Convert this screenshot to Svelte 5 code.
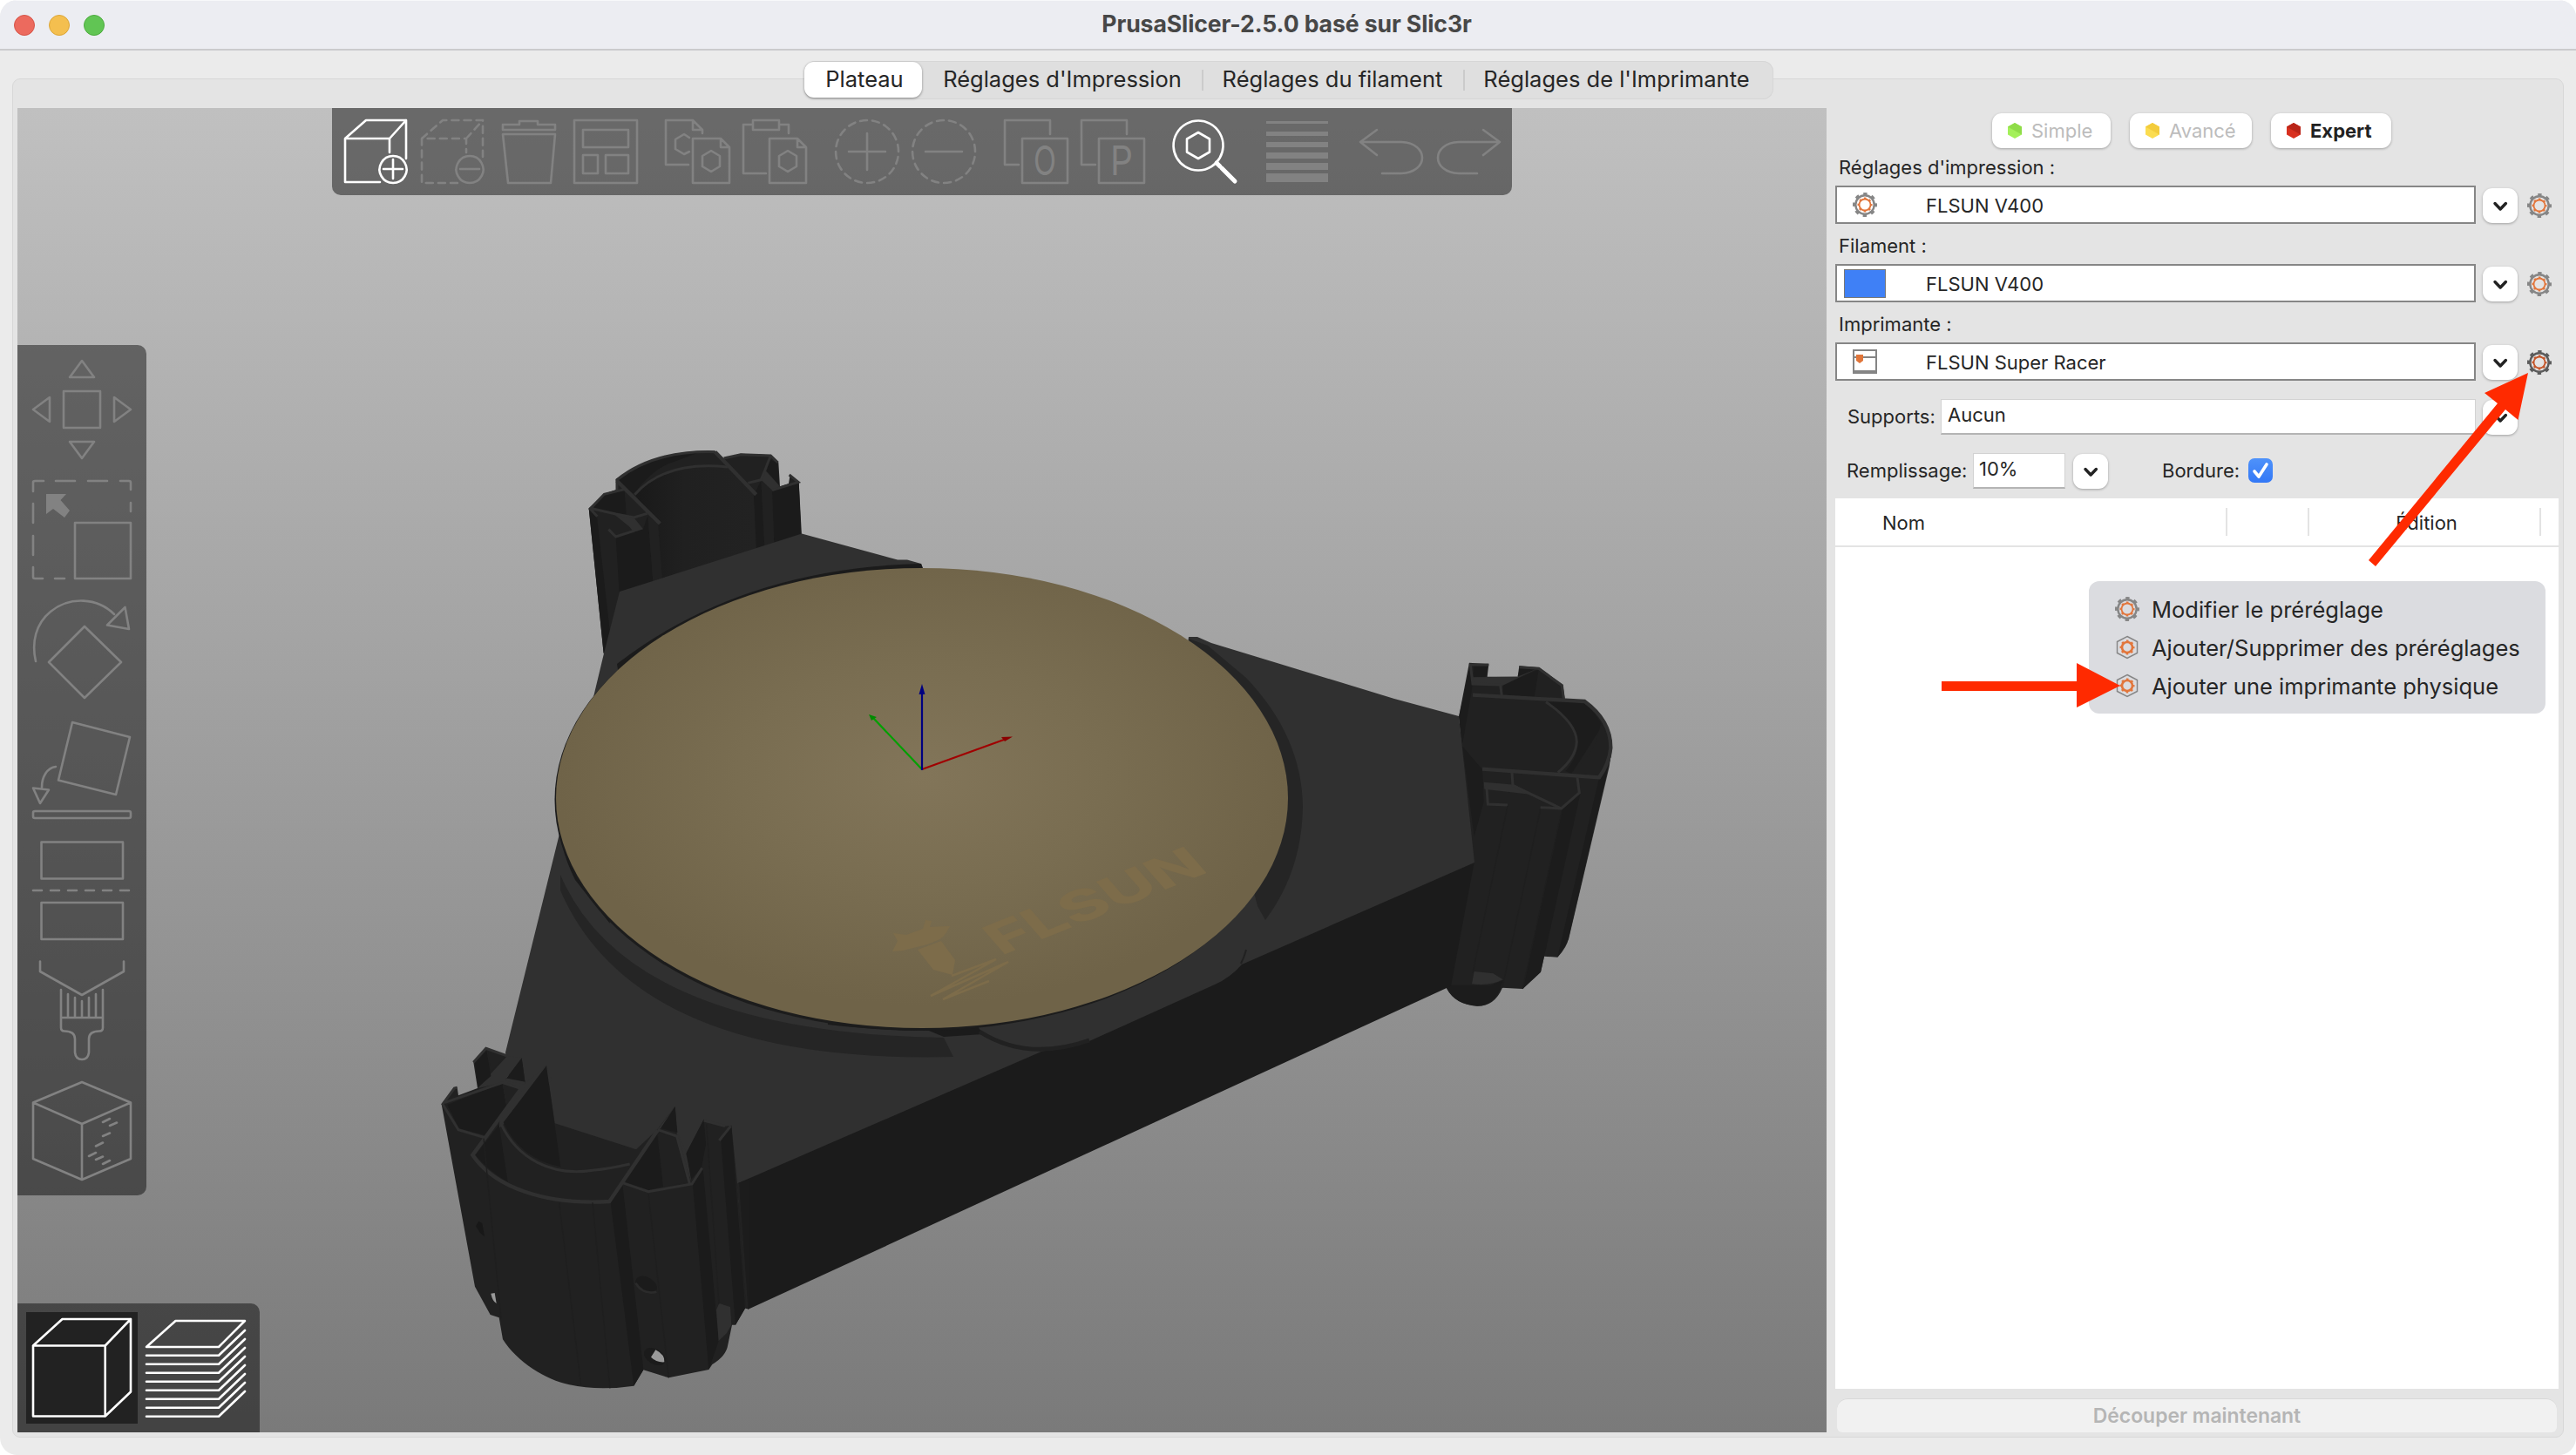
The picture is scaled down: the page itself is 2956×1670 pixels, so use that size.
<script>
  const tabs = [
    { label: 'Plateau', cls: 'active w1' },
    { label: "Réglages d'Impression", cls: 'w2' },
    { label: 'Réglages du filament', cls: 'w3' },
    { label: "Réglages de l'Imprimante", cls: 'w4' }
  ];

  const modes = [
    { label: 'Simple', cls: 'simple', light: '#a4f05a', dark: '#8fdc48' },
    { label: 'Avancé', cls: 'advanced', light: '#fbdc50', dark: '#f3cc3c' },
    { label: 'Expert', cls: 'expert', light: '#d8301f', dark: '#b92518' }
  ];

  const presets = [
    { label: "Réglages d'impression :", value: 'FLSUN V400', icon: 'gear' },
    { label: 'Filament :', value: 'FLSUN V400', icon: 'color' },
    { label: 'Imprimante :', value: 'FLSUN Super Racer', icon: 'printer' }
  ];

  // Every tool icon shares the coordinate system of the window; x is its left edge.
  const groups = [
    [
      { x: 391, on: true, d: 'M436 209H396V159H447V175M396 159L420 138H466V182M447 159L466 138', thin: 'M451 179a15.500 15.500 0 1 0 .1 0zM440 194h22M451 183v22' },
      { x: 479, dash: 'M525 210H484V159H535V175M484 159L508 138H554V180M535 159L554 138', d: 'M539 179a15.500 15.500 0 1 0 .1 0zM528 194h22' },
      { x: 567, d: 'M577 149v-6h19v-4h21v4h20v6zM577 154h60l-5 56h-49z' },
      { x: 655, d: 'M659 138h72v72h-72zM669 149h52v20h-52zM669 178h17v21h-17zM695 178h26v21h-26z' }
    ],
    [
      { x: 761, d: 'M790 189H764V138H795L806 149V153M795 138V149H806M791 158L785 154L775 160V171L785 177L791 174M795 159H827L837 169V210H795zM827 159V169H837M816 173l10 6v12l-10 6l-10-6v-12z' },
      { x: 849, d: 'M879 199H853V143H864M894 143H905V153M864 138H894V149H864zM883 159H915L925 169V210H883zM915 159V169H925M904 173l10 6v12l-10 6l-10-6v-12z' }
    ],
    [
      { x: 955, dash: 'M995 138a36 36 0 1 0 .1 0z', d: 'M974 174h42M995 153v42' },
      { x: 1043, dash: 'M1083 138a36 36 0 1 0 .1 0z', d: 'M1062 174h42' }
    ],
    [
      { x: 1149, d: 'M1169 189H1153V138H1205V154M1173 159h52v51h-52z', t: 'O', tx: 1199 },
      { x: 1237, d: 'M1257 189H1241V138H1293V154M1261 159h52v51h-52z', t: 'P', tx: 1287 }
    ],
    [{ x: 1343, on: true, d: 'M1375 138.500a28.500 28.500 0 1 0 .1 0zM1375 152l13 7.500v15l-13 7.500l-13-7.500v-15z', fat: 'M1396 187L1400 191M1402 193L1417 208' }],
    [{ x: 1449, f: 'M1453 139h71v3h-71zM1453 151h71v5h-71zM1453 163h71v6h-71zM1453 175h71v7h-71zM1453 187h71v8h-71zM1453 199h71v10h-71z' }],
    [
      { x: 1555, d: 'M1580 149L1561 163L1580 178M1561 163H1608C1640 164 1640 198 1608 199H1586' },
      { x: 1643, d: 'M1702 149L1721 163L1702 178M1721 163H1674C1642 164 1642 198 1674 199H1695' }
    ]
  ];

  const gizmos = [
    { y: 401, d: 'M94 414L108 433H80zM94 526L108 507H80zM38 470L57 456V484zM150 470L131 456V484zM73 449h42v42h-42z' },
    { y: 539, d: 'M86 600h64v64h-64zM38 564V554a2 2 0 0 1 2-2H50M64 552H86M101 552H123M138 552H148a2 2 0 0 1 2 2V562M150 577V587M38 578V600M38 615V637M38 651V662a2 2 0 0 0 2 2H49M63 664H74', f: 'M53 567H76L69.500 574L80 586L74 594L61 584L53 590z' },
    { y: 677, d: 'M41 759C36 737 41 716 58 702C80 684 112 686 131 705M143.500 697L148 722L123 717.500zM97 719L139 760L97 801L56 760z' },
    { y: 815, d: 'M83 829L149 846L133 912L67 895.500zM64 880C54 881 48 892 48 903.500M38 904.500L56 906.500L46 922zM40 931H148a2 2 0 0 1 2 2V937a2 2 0 0 1-2 2H40a2 2 0 0 1-2-2V933a2 2 0 0 1 2-2z' },
    { y: 953, d: 'M47.500 966.500h93.500v42h-93.500zM47.500 1036h93.500v42h-93.500zM38 1022h10M58 1022h10M78 1022h10M98 1022h10M118 1022h10M138 1022h10' },
    { y: 1091, d: 'M46 1103.500V1115L94 1142L142 1115V1103.500M70 1136V1179.500Q70 1183.500 74 1183.500Q86 1183.500 86 1192.500V1208Q87 1216 94 1216Q101 1216 102 1208V1192.500Q102 1183.500 114 1183.500Q118 1183.500 118 1179.500V1136M70 1168H118M78 1141V1168M86 1145V1168M94 1149V1168M102 1145V1168M110 1141V1168' },
    { y: 1229, d: 'M94 1242L150 1265.500V1330L94 1354L38 1330V1265.500zM38 1265.500L94 1290L150 1265.500M94 1290V1354M118 1288l8-4M126 1292l8-3.500M118 1304l8-3.500M110 1315.500l8-4M102 1327l8-4M110 1331l8-3.500M118 1336l8-4' }
  ];

  const layerOffsets = [10, 20, 30, 40, 50, 60, 70, 80];
  const menu = [
    { label: 'Modifier le préréglage', icon: 'gear' },
    { label: 'Ajouter/Supprimer des préréglages', icon: 'nut' },
    { label: 'Ajouter une imprimante physique', icon: 'nut' }
  ];
</script>

{#snippet gear(dark)}
  <svg class="gear" class:dark viewBox="0 0 28 28" fill="none">
    <circle class="g" cx="14" cy="14" r="10.700" stroke-width="2.400" />
    <circle class="g" cx="14" cy="14" r="12.500" stroke-width="3" stroke-dasharray="4.400 5.417" stroke-dashoffset="2.200" />
    <circle class="o" cx="14" cy="14" r="6.500" stroke-width="1.800" />
    <circle class="o" cx="14" cy="14" r="7.600" stroke-width="1.800" stroke-dasharray="2.600 3.370" stroke-dashoffset="1.300" />
  </svg>
{/snippet}

{#snippet nut()}
  <svg class="gear" viewBox="0 0 28 28" fill="none">
    <path class="g" d="M14 1.500L25.500 7.500V20.500L14 26.500L2.500 20.500V7.500z" stroke-width="1.500" />
    <circle class="o" cx="14" cy="14" r="6" stroke-width="2.600" />
    <circle class="o" cx="14" cy="14" r="7.600" stroke-width="1.800" stroke-dasharray="2.600 3.370" stroke-dashoffset="1.300" />
  </svg>
{/snippet}

{#snippet chevron()}
  <button class="chev" aria-label="Ouvrir la liste">
    <svg viewBox="0 0 40 40"><path d="M14 17.500L20.200 24L26.400 17.500" /></svg>
  </button>
{/snippet}

<div class="window">
  <header>
    <div class="lights"><i class="red"></i><i class="yellow"></i><i class="green"></i></div>
    <h1>PrusaSlicer-2.5.0 basé sur Slic3r</h1>
  </header>

  <nav>
    {#each tabs as tab}
      <button class={tab.cls}><span>{tab.label}</span></button>
    {/each}
  </nav>

  <main>
    <section class="canvas">
      <svg class="scene" viewBox="20 124 2076 1520">
        <defs>
          <radialGradient id="bed" cx="0.5" cy="0.45" r="0.5">
            <stop offset="0" stop-color="#827559" />
            <stop offset="0.5" stop-color="#796d51" />
            <stop offset="1" stop-color="#6f6348" />
          </radialGradient>
          <linearGradient id="tube" x1="0" x2="1">
            <stop offset="0" stop-color="#191919" />
            <stop offset="0.4" stop-color="#202020" />
            <stop offset="1" stop-color="#222" />
          </linearGradient>
        </defs>

        <!-- rear tower -->
        <g transform="translate(640 500) scale(.33333)">
          <path class="mid" d="M107 250L158 750L300 700L840 345L830 160L800 135L795 165L765 175L760 93L733 67L630 62L572 78L542 53Q350 45 200 150L203 185L160 200z" />
          <path fill="url(#tube)" d="M265 203Q380 85 585 110L675 205L684 395L360 500L345 305z" />
          <path class="deep" d="M107 250L135 278L180 680L158 750zM200 350L294 322L310 275L328 505L212 540zM675 205L700 155L712 385L684 395zM738 188L830 160L838 345L745 375zM120 248L160 205L230 190L236 272L200 268zM205 158Q330 60 480 60L400 90Q330 110 262 200zM728 80L756 95L762 170L720 122z" />
          <path class="mid" d="M310 275L345 305L360 495L328 505zM700 155L738 188L745 375L712 385z" />
          <path class="plate" d="M190 268L262 282L294 322L262 332L245 312zM713 118L765 175L738 188L700 152z" />
          <path class="rim" d="M136 278L112 252L160 202L230 185M204 188V152Q330 50 542 56M112 250L200 270L262 282L308 268M175 323L200 348L262 328M265 203Q370 85 585 108M572 78L630 65L733 69L758 93M733 69L713 120L700 152L655 163M738 188L828 160L797 135" />
          <path class="rim wide" d="M204 156L352 303M542 56L683 203" />
        </g>

        <!-- right tower -->
        <g transform="translate(1600 720) scale(.33333)">
          <path class="mid" d="M258 122L325 127L320 170H425L430 133L500 139L580 198L587 246L655 252Q750 320 750 415Q748 440 740 470L600 1070Q595 1100 562 1136L516 1133L504 1187L442 1245L372 1241Q345 1305 285 1304Q210 1300 180 1243L180 1100L265 810L222 308z" />
          <path class="deep" d="M262 130L270 195L235 400L222 308zM275 133L322 135L316 170L272 172zM432 142L490 144L425 168zM375 200L497 145L482 240L373 232zM532 258L650 258Q700 300 715 340L610 505L590 495Q640 440 628 380Q610 320 532 258zM577 628L638 572L612 640L504 1187L442 1245zM640 574L516 1133L504 1187L560 700zM705 520L747 430L740 480L600 1075L562 1136zM180 1243L195 1232H267L330 1234L374 1216Q350 1305 285 1304Q210 1300 180 1243zM235 410L303 490L308 600L275 720z" opacity=".85" />
          <path class="mid" d="M610 500Q700 430 710 330Q740 380 743 415Q735 470 703 512z" />
          <path class="plate" d="M268 172L425 170L500 139L370 202L268 195zM308 533L415 542L480 577L310 557zM275 1185L340 1192L374 1213Q330 1236 267 1228z" />
          <path class="rim" d="M325 129H262L270 195L365 198L370 236M430 137L497 142L577 200L583 246M522 257Q628 330 628 395Q625 450 563 500M405 500L408 545L575 624L637 570L630 517M575 624L503 620M317 540L322 609L390 612" />
          <path class="rim wide" d="M270 233L655 255Q745 320 745 415Q740 470 705 517L303 488" />
          <path class="seam" d="M390 615L270 1190M503 625L372 1241M577 630L442 1245" />
        </g>

        <!-- base -->
        <path class="deep" d="M846 1357L1692 988L1665 1131.500L1660 1134L858 1503z" />
        <path class="plate" d="M711 679L920 612.500L1030 642.500H1041L1057 647L1060 655L1360 760L1364 731H1374L1390 738L1600 802L1674 822L1692 990L1425 1107Q1412 1122 1394 1130L1250 1195L1195 1207L847 1358L846 1500L600 1350L580 1208L641 961L681 800L693 750z" />
        <path class="shade" d="M643 1004Q720 1185 1083 1191L1094 1213Q730 1222 643 1022z" />
        <path class="deep" d="M950 1172L1120 1175L1128 1187L1083 1190L1066 1183Q1000 1182 950 1176z" />
        <path fill="none" stroke="#212121" stroke-width="5" d="M1124 1184C1165 1210 1210 1208 1250 1194" />
        <path fill="none" stroke="#212121" stroke-width="2" d="M1424 1106Q1428 1098 1430 1090" />
        <path class="shade" d="M1364 733L1386 741L1430 778Q1494 845 1495 926Q1494 1000 1452 1056L1443 1040z" />
        <path class="deep" d="M708 762Q850 652 1057 647L1060 655L1045 680L710 775zM640 930Q640 970 660 1010L700 1060L680 950z" />
        <ellipse cx="1055.500" cy="918" rx="419" ry="265" fill="#1c1c1c" />
        <ellipse cx="1058" cy="916" rx="420" ry="264" fill="url(#bed)" />

        <!-- bed artwork -->
        <g class="art">
          <path d="M1025 1071L1040 1073L1059 1066L1062 1056L1069 1057L1067 1064L1090 1063Q1083 1078 1074 1080L1064 1084L1036 1091L1024 1092L1030 1080z" />
          <path d="M1053 1090L1080 1080L1096 1102L1093 1119L1071 1113z" />
          <path fill="none" stroke="#7d6c4a" stroke-width="2.500" d="M1092 1120L1143 1101L1068 1143L1157 1104L1082 1147L1135 1126" />
          <text transform="matrix(.928 -.375 .70 .80 1149 1097)" textLength="258" lengthAdjust="spacingAndGlyphs">FLSUN</text>
        </g>

        <path class="axis" stroke="#a00000" d="M1058 883L1152 849" /><path fill="#8a0000" d="M1162 845.500L1149 846L1153 851z" />
        <path class="axis" stroke="#00a000" d="M1058 883L1002 824" /><path fill="#008a00" d="M997 820L1000 827L1006 823z" />
        <path class="axis" stroke="#000080" d="M1058 884V795" /><path fill="#000080" d="M1058 785L1054.500 797H1061.500z" />

        <!-- front tower -->
        <g transform="translate(480 1180) scale(.33333)">
          <path class="mid" d="M80 262L195 890L248 987L278 997L291 1072C340 1150 440 1212 520 1228Q620 1250 742 1232L775 1177L862 1204L1000 1176L1012 1158Q1060 1130 1066 1090L1080 1022H1092L1125 965L1135 967L1098 533L1078 335L1056 338L983 314L922 432L935 525L890 362L884 270L822 350L750 418L470 328L441 130L290 325L368 190L356 103L302 175L306 98L233 66L190 118L204 207L138 232L134 205H124z" />
          <path class="plate" d="M306 96L358 103L302 175L368 190L441 130L460 180L278 345L290 188L204 207zM890 355L925 432L940 530zM835 345L822 352L884 270z" />
          <path class="deep" d="M195 120L235 78L250 165L206 204zM302 175L356 103L368 190zM100 264L290 190L305 275L232 370L140 345zM293 325L441 130L490 478Q350 450 293 325zM197 437L278 333L308 530Q240 490 197 437zM835 345L884 270L892 360zM708 528L822 360L843 546L792 558zM922 432L983 314L990 400L975 480L940 520zM1042 388L1078 335L1125 965L1092 1022zM945 540L980 485L1034 1077L1000 1176zM662 600L703 540L775 1177L742 1232z" />
          <path class="mid" d="M240 78L300 97L250 150zM290 190L352 208L305 275zM825 360L888 378L925 530L843 546z" />
          <path fill="#1c1c1c" d="M1100 535L1140 520V960L1130 966z" />
          <path class="plate" d="M1036 948L1074 960L1078 1022L1062 1050L1034 1077L1026 970z" />
          <path class="rim" d="M190 118L233 70L306 96M134 205L124 207L84 262L138 350L232 378M92 256L290 188L352 208M285 330C340 450 460 512 600 490Q660 484 728 468M703 533L792 563L942 537L977 482M824 350L890 372L934 535M983 318L1056 338M1076 337L1036 387M302 177L368 190" />
          <path fill="none" stroke="#222" stroke-width="7" d="M1101 535L1132 964" />
          <path class="rim wide" d="M360 200L187 437C260 545 430 610 658 597L824 352" />
          <path class="seam" d="M485 600L560 1230M600 600L660 1240M792 570L862 1204M225 380L285 1000M992 330L1035 950" />
          <ellipse cx="785" cy="884" rx="40" ry="26" transform="rotate(30 785 884)" fill="#1b1b1b" />
          <path fill="none" stroke="#2b2b2b" stroke-width="8" d="M748 878Q775 920 820 908" />
          <ellipse cx="814" cy="1131" rx="40" ry="26" transform="rotate(30 814 1131)" fill="#1b1b1b" />
          <path fill="#999" d="M817 1108L801 1133Q820 1152 847 1150Q850 1125 817 1108z" />
          <path fill="#999" d="M250 914L263 912L269 948Q255 940 250 914z" />
          <path fill="#181818" d="M198 682L208 665L220 672L228 718L212 704z" />
        </g>
      </svg>

      <div class="toolbar top">
        {#each groups as group}
          <div class="group">
            {#each group as g}
              <svg class:on={g.on} viewBox="{g.x} 134 80 80">
                {#if g.dash}<path class="dash" d={g.dash} />{/if}
                {#if g.d}<path d={g.d} />{/if}
                {#if g.thin}<path d={g.thin} />{/if}
                {#if g.fat}<path class="fat" d={g.fat} />{/if}
                {#if g.f}<path class="fill" d={g.f} />{/if}
                {#if g.t}<text x={g.tx - 13} y="201" textLength="26" lengthAdjust="spacingAndGlyphs">{g.t}</text>{/if}
              </svg>
            {/each}
          </div>
        {/each}
      </div>

      <div class="toolbar side">
        {#each gizmos as g}
          <svg viewBox="20 {g.y} 148 138">
            <path d={g.d} />
            {#if g.f}<path class="fill" d={g.f} />{/if}
          </svg>
        {/each}
      </div>

      <div class="toolbar views">
        <svg class="on selected" viewBox="30 1506 128 128">
          <path d="M38 1544.500H120.700V1625.500H38zM38 1544.500L71.500 1514H150V1597.500L120.700 1625.500M120.700 1544.500L150 1514" />
        </svg>
        <svg class="on" viewBox="160 1506 128 128">
          <path d="M168 1546L201.500 1516H281L251 1546z" />
          {#each layerOffsets as o}
            <path d="M168 {1545.700 + o}H251L281 {1517 + o}" />
          {/each}
        </svg>
      </div>
    </section>

    <aside>
      <div class="modes">
        {#each modes as m}
          <button class={m.cls}>
            <svg viewBox="0 0 16 18"><path fill={m.light} d="M8 0L16 4.500V13.500L8 18L0 13.500V4.500z" /><path fill={m.dark} d="M8 0L16 4.500V13.500L0 4.500z" /></svg>
            <span>{m.label}</span>
          </button>
        {/each}
      </div>

      {#each presets as p, i}
        <div class="preset">
          <label for="preset-{i}"><span>{p.label}</span></label>
          <div class="line">
            <div class="combo" id="preset-{i}">
              <div class="pic">
                {#if p.icon === 'gear'}{@render gear(false)}
                {:else if p.icon === 'color'}<b></b>
                {:else}
                  <svg class="gear" viewBox="0 0 28 28"><path fill="none" stroke="#858585" stroke-width="2" d="M1 1H27V27H1zM1 9H27" /><path fill="#858585" d="M1 24H27V28H1z" /><path fill="#e0753a" d="M4 6H12V13L8 16L4 13z" /></svg>
                {/if}
              </div>
              <span>{p.value}</span>
            </div>
            {@render chevron()}
            {@render gear(i === 2)}
          </div>
        </div>
      {/each}

      <div class="line supports">
        <span class="name">Supports:</span>
        <div class="field">Aucun</div>
        {@render chevron()}
      </div>
      <div class="line infill">
        <span class="name">Remplissage:</span>
        <div class="field">10%</div>
        {@render chevron()}
        <span class="brim">Bordure:</span>
        <svg class="check" viewBox="0 0 28 28"><path d="M7 15L12 21L21 7" /></svg>
      </div>

      <div class="list">
        <div class="head">
          <span class="c1">Nom</span><span class="c2"></span><span class="c3">Édition</span><span class="c4"></span>
        </div>
      </div>
      <button class="slice">Découper maintenant</button>
    </aside>
  </main>

  <div class="menu">
    {#each menu as item}
      <div class="item">
        {#if item.icon === 'gear'}{@render gear(false)}{:else}{@render nut()}{/if}
        <span>{item.label}</span>
      </div>
    {/each}
  </div>

  <svg class="arrows" viewBox="2200 400 740 440">
    <path d="M2228 782H2383V761L2433 787L2383 812V793H2228z" />
    <path d="M2718 643L2866 463L2851 451L2901 428L2889.500 482L2875 470L2726 650z" />
  </svg>
</div>

<style>
  :global(body) { margin: 0; background: #fff; }
  * { box-sizing: border-box; }
  .window {
    position: relative; width: 2956px; height: 1670px; overflow: hidden;
    display: flex; flex-direction: column; border-radius: 20px; background: #ebebeb;
    font-family: Inter, "Liberation Sans", sans-serif; font-size: 22px; color: #262626;
  }
  button { font: inherit; border: 0; padding: 0; margin: 0; color: inherit; }
  span { white-space: nowrap; }

  header {
    height: 58px; flex: none; display: grid; grid-template-columns: 1fr auto 1fr; align-items: center;
    background: #ecedf2; border-bottom: 2px solid #cbcbcd; border-top: 1px solid #f8f8fa;
  }
  .lights { display: flex; gap: 16px; padding-left: 16px; }
  .lights i { width: 24px; height: 24px; border-radius: 50%; }
  .red { background: #ec6a5e; border: 1px solid #d55448; }
  .yellow { background: #f4bf4f; border: 1px solid #dba63a; }
  .green { background: #61c554; border: 1px solid #4dab3f; }
  h1 { margin: 0; padding: 0 3px 4px 0; font-size: 26.600px; line-height: 30px; font-weight: 700; color: #474747; letter-spacing: -0.1px; }

  nav {
    position: relative; z-index: 1; flex: none; align-self: center; display: flex; width: 1112px; height: 44px;
    margin: 12px 0 -24px 2px; border-radius: 12px; background: #dfdfdf; box-shadow: inset 0 0 0 1px #d6d6d6;
    font-size: 25.500px;
  }
  nav button { background: none; padding-bottom: 3px; }
  nav .w1 { width: 135px; padding-left: 3px; }
  nav .w2 { width: 321px; padding-left: 1px; }
  nav .w3 { width: 300px; }
  nav .w4 { width: 356px; padding-right: 4px; }
  nav .w3, nav .w4 { background: linear-gradient(#cbcbcb, #cbcbcb) left center / 2px 24px no-repeat; }
  nav .active { height: 41px; margin-top: 1px; padding-bottom: 2px; border-radius: 11px; background: #fff; box-shadow: 0 1px 3px rgba(0, 0, 0, .4); }

  main {
    flex: 1; min-height: 0; display: flex; gap: 10px; margin: 0 14px 20px 14px; padding: 33px 4px 5px 5px;
    border: 1px solid #d8d8d8; border-radius: 9px; background: #e4e4e4;
  }
  .canvas { position: relative; width: 2076px; height: 1520px; background: linear-gradient(#c0c0c0, #7a7a7a); overflow: hidden; }
  .scene { display: block; width: 2076px; height: 1520px; }
  .deep { fill: #1b1b1b; }
  .mid { fill: #212121; }
  .shade { fill: #252525; }
  .plate { fill: #303030; }
  .rim { fill: none; stroke: #303030; stroke-width: 9; }
  .rim.wide { stroke-width: 13; }
  .seam { fill: none; stroke: #1f1f1f; stroke-width: 4; }
  .axis { fill: none; stroke-width: 2.200; }
  .art { fill: #7d6c4a; }
  .art text { font-size: 52px; font-weight: 800; }

  .toolbar { position: absolute; display: flex; background: rgba(0, 0, 0, .45); }
  .toolbar svg { fill: none; stroke: #828282; stroke-width: 2.600; stroke-linejoin: round; stroke-linecap: round; }
  .toolbar svg.on { stroke: #fff; }
  .toolbar .dash { stroke-dasharray: 8 6.100; }
  .toolbar .fill { fill: #828282; stroke: none; }
  .toolbar .fat { stroke-width: 5; }
  .toolbar text { fill: #828282; stroke: none; font-size: 46px; font-weight: 400; }
  .top { left: 361px; top: 0; width: 1354px; height: 100px; padding: 10px; gap: 26px; border-radius: 0 0 10px 10px; }
  .top .group { display: flex; gap: 8px; }
  .top svg { width: 80px; height: 80px; }
  .side { left: 0; top: 272px; flex-direction: column; padding: 5px 0; border-radius: 0 10px 10px 0; }
  .side svg { width: 148px; height: 138px; }
  .views { left: 0; bottom: 0; gap: 2px; padding: 10px; width: 278px; border-radius: 0 10px 0 0; }
  .views svg { width: 128px; height: 128px; }
  .views .selected { background: #222; }

  aside { width: 830px; display: flex; flex-direction: column; }
  .modes { display: flex; gap: 22px; padding: 6px 0 0 180px; }
  .modes button {
    display: flex; align-items: center; gap: 11px; height: 40px; padding-left: 18px; border-radius: 11px;
    background: #fff; box-shadow: 0 1px 3px rgba(0, 0, 0, .3); color: #bcbcbc;
  }
  .modes svg { width: 16px; height: 18px; }
  .modes .simple { width: 136px; }
  .modes .advanced { width: 140px; }
  .modes .expert { width: 138px; color: #222; font-weight: 700; }

  .preset { height: 90px; }
  label { display: flex; align-items: center; height: 43px; padding: 1px 0 0 4px; }
  .line { display: flex; align-items: center; }
  .combo { width: 735px; height: 44px; display: flex; align-items: center; border: 2px solid #868686; background: #fff; }
  .combo span { padding-top: 1px; }
  .pic { width: 64px; margin-right: 38px; display: flex; justify-content: center; }
  .pic b { width: 48px; height: 33px; background: #3f80f6; border: 1px solid #777; }
  .gear { width: 28px; height: 28px; flex: none; display: block; }
  .line > .gear { margin-top: 1px; }
  .gear .g { stroke: #868686; }
  .gear .o { stroke: #e2763c; }
  .gear.dark .g { stroke: #5c5c5c; }
  .gear.dark .o { stroke: #c4562a; }
  .chev { width: 40px; height: 40px; margin: 1px 11px 0 8px; border-radius: 11px; background: #fff; box-shadow: 0 1px 3px rgba(0, 0, 0, .3); flex: none; }
  .chev svg { display: block; width: 40px; height: 40px; }
  .chev path { fill: none; stroke: #222; stroke-width: 3.400; stroke-linecap: round; stroke-linejoin: round; }
  .field { height: 41px; padding: 4px 7px; border: 1px solid #d2d2d2; border-bottom: 2px solid #b4b4b4; background: #fff; line-height: 27px; }
  .supports { height: 42px; margin-top: 17px; }
  .supports .name { width: 121px; padding-left: 14px; }
  .supports .field { width: 614px; }
  .infill { height: 42px; margin-top: 20px; }
  .infill .name { width: 158px; padding-left: 13px; }
  .infill .field { width: 106px; padding-left: 6px; }
  .infill .chev { margin-left: 9px; }
  .brim { margin-left: 51px; width: 99px; }
  .check { width: 28px; height: 28px; border-radius: 7px; background: linear-gradient(#4f92fa, #3378f6); }
  .check path { fill: none; stroke: #fff; stroke-width: 3.600; stroke-linecap: round; stroke-linejoin: round; }

  .list { flex: 1; margin-top: 11px; background: #fff; }
  .head { display: flex; align-items: center; height: 56px; border-bottom: 2px solid #e4e4e4; }
  .head span { height: 32px; line-height: 34px; border-right: 2px solid #e3e3e3; }
  .c1 { width: 450px; padding-left: 54px; }
  .c2 { width: 94px; }
  .head .c3 { width: 266px; text-align: center; padding-left: 5px; }
  .head .c4 { border: 0; }
  .slice {
    height: 39px; margin: 11px 2px 0; border-radius: 12px 12px 6px 6px; background: #f1f1f1;
    box-shadow: inset 0 1px 0 #d8d8d8; color: #b5b5b5; font-weight: 600; font-size: 22.900px;
  }

  .menu {
    position: absolute; left: 2397px; top: 667px; width: 524px; height: 152px; padding: 10px 0 10px 30px;
    display: flex; flex-direction: column; border-radius: 12px; background: #dbdce0; font-size: 25.500px;
  }
  .item { display: flex; align-items: center; gap: 14px; height: 44px; }
  .arrows { position: absolute; left: 2200px; top: 400px; width: 740px; height: 440px; fill: #ff2a00; }
</style>
